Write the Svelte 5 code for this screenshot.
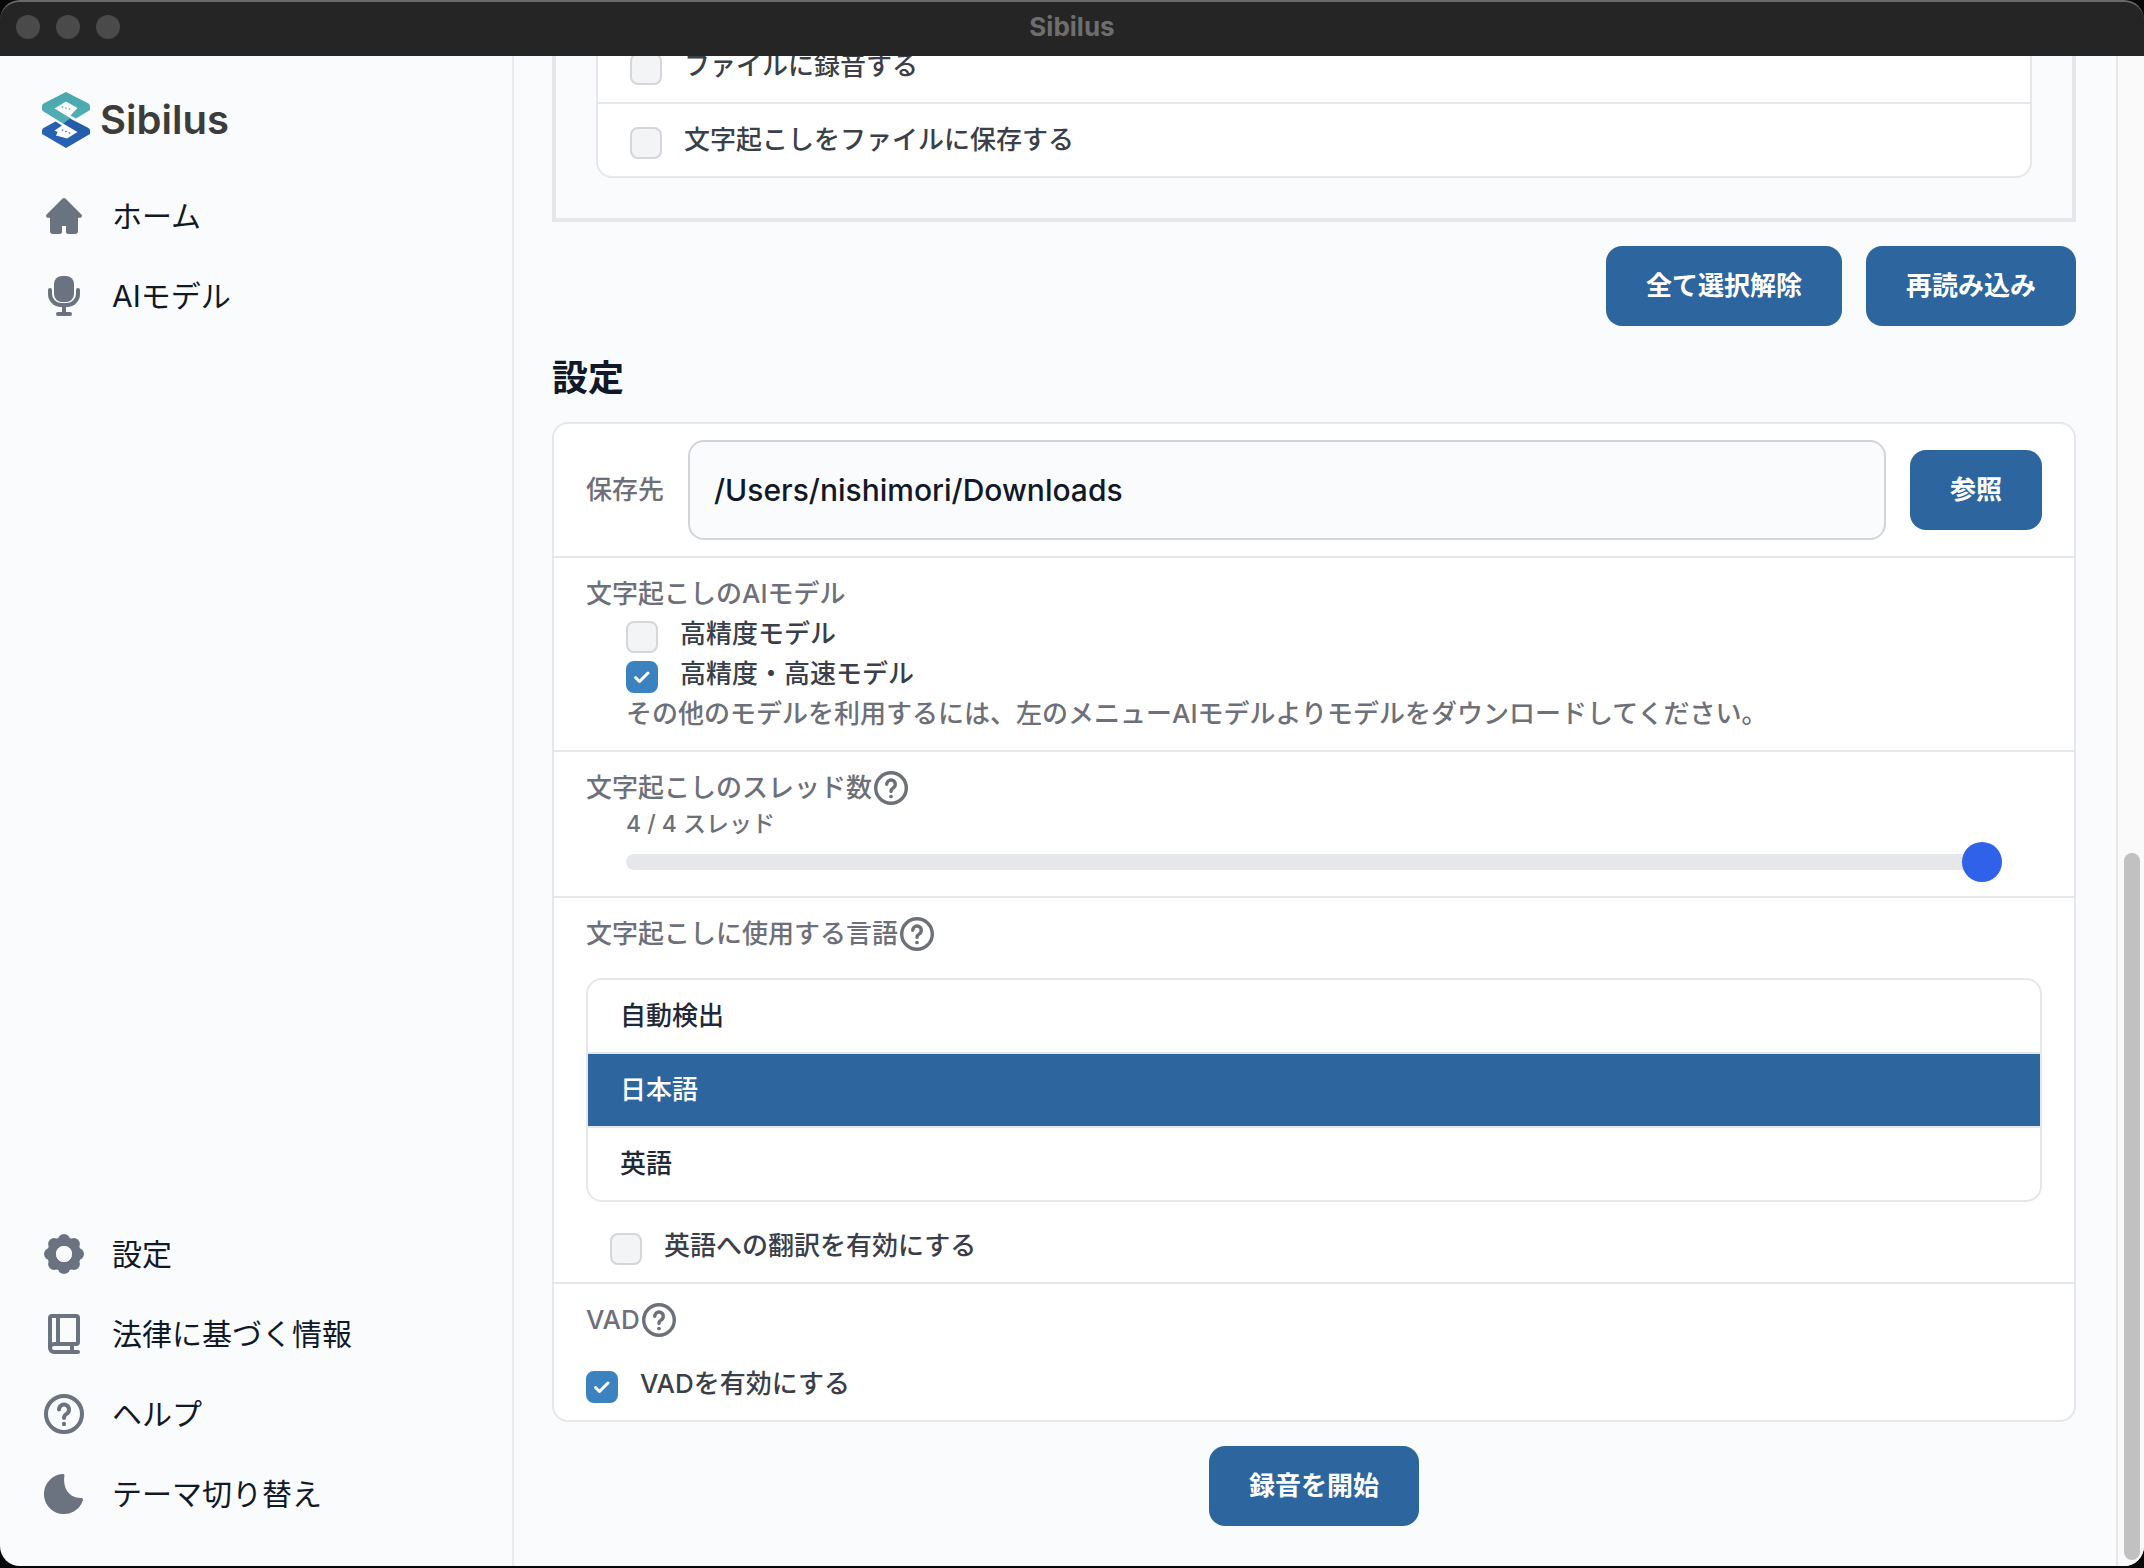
<script lang="ts">
  interface NavItem {
    label: string;
    icon: 'home' | 'mic' | 'gear' | 'book' | 'help' | 'moon';
  }

  const mainNav: NavItem[] = [
    { label: 'ホーム', icon: 'home' },
    { label: 'AIモデル', icon: 'mic' },
  ];

  const footerNav: NavItem[] = [
    { label: '設定', icon: 'gear' },
    { label: '法律に基づく情報', icon: 'book' },
    { label: 'ヘルプ', icon: 'help' },
    { label: 'テーマ切り替え', icon: 'moon' },
  ];

  const gearAngles = [0, 45, 90, 135, 180, 225, 270, 315];
  const languages = ['自動検出', '日本語', '英語'];
  const maxThreads = 4;

  let outputs = $state([
    { label: 'ファイルに録音する', checked: false },
    { label: '文字起こしをファイルに保存する', checked: false },
  ]);
  let models = $state([
    { label: '高精度モデル', checked: false },
    { label: '高精度・高速モデル', checked: true },
  ]);
  let saveDir = $state('/Users/nishimori/Downloads');
  let threads = $state(4);
  let language = $state('日本語');
  let translate = $state(false);
  let vad = $state(true);

  function clearOutputs() {
    for (const output of outputs) {
      output.checked = false;
    }
  }
</script>

{#snippet questionMark()}
  <g fill="none" stroke="currentColor" stroke-width="4" stroke-linecap="round" stroke-linejoin="round">
    <circle cx="20" cy="20" r="18" />
    <path d="M15 15.6a5 5 0 1 1 7.6 4.3c-1.8 1.1-2.6 1.9-2.6 4.1" />
  </g>
  <circle cx="20" cy="30" r="2.2" fill="currentColor" />
{/snippet}

{#snippet navLink(item: NavItem)}
  <a class="nav-link" href="#{item.icon}">
    <svg class="nav-icon" viewBox="0 0 40 40" aria-hidden="true">
      {#if item.icon === 'home'}
        <path
          fill="currentColor"
          d="M18.6 2.6a2 2 0 0 1 2.8 0l16 15.8a2 2 0 0 1-1.4 3.4h-2V35a3 3 0 0 1-3 3h-7a2 2 0 0 1-2-2v-6h-4v6a2 2 0 0 1-2 2H9a3 3 0 0 1-3-3V21.8H4a2 2 0 0 1-1.4-3.4z"
        />
      {:else if item.icon === 'mic'}
        <rect x="10" y="0" width="20" height="26" rx="8" fill="currentColor" />
        <path
          d="M6 14v4a11 11 0 0 0 11 11h6a11 11 0 0 0 11-11v-4M20 29v9M14 38h12"
          fill="none"
          stroke="currentColor"
          stroke-width="4"
          stroke-linecap="round"
        />
      {:else if item.icon === 'gear'}
        <g fill="currentColor">
          {#each gearAngles as angle}
            <circle cx="20" cy="6" r="6" transform="rotate({angle} 20 20)" />
          {/each}
        </g>
        <circle cx="20" cy="20" r="12.5" fill="none" stroke="currentColor" stroke-width="9" />
        <circle cx="20" cy="20" r="8" fill="#fafbfd" />
      {:else if item.icon === 'book'}
        <path
          d="M34 38H10a4 4 0 0 1-4-4V4a2 2 0 0 1 2-2h24a2 2 0 0 1 2 2v24a2 2 0 0 1-2 2H10a4 4 0 0 0-4 4M14 2v28M28 30v8"
          fill="none"
          stroke="currentColor"
          stroke-width="4"
          stroke-linecap="round"
        />
      {:else if item.icon === 'help'}
        {@render questionMark()}
      {:else}
        <path
          fill="currentColor"
          d="M20.4 1.8C18.5 15 26 24.5 37.5 24q2 .2 1.3 2.7A20 20 0 1 1 18.5.1q2.5-.3 1.9 1.7z"
        />
      {/if}
    </svg>
    <span>{item.label}</span>
  </a>
{/snippet}

{#snippet help(topic: string)}
  <button class="help" type="button" aria-label={topic}>
    <svg viewBox="0 0 40 40" aria-hidden="true">{@render questionMark()}</svg>
  </button>
{/snippet}

<div class="window">
  <header class="titlebar">
    <div class="lights"><i></i><i></i><i></i></div>
    <div class="title">Sibilus</div>
  </header>

  <div class="body">
    <aside class="sidebar">
      <div class="brand">
        <svg viewBox="0 0 48 56" aria-hidden="true">
          <defs>
            <linearGradient id="teal" x1="0" y1="0" x2="0" y2="1">
              <stop offset="0" stop-color="#4ba6ad" />
              <stop offset="1" stop-color="#4fb0b5" />
            </linearGradient>
            <linearGradient id="blue" x1="1" y1="0" x2="0" y2="1">
              <stop offset="0" stop-color="#1f5aa6" />
              <stop offset="1" stop-color="#2c66b8" />
            </linearGradient>
          </defs>
          <path
            fill="url(#teal)"
            d="M24 0 46.5 11.5Q48 12.5 48 14V18L34 26.5 28.5 23.5 35.5 16 24 9.5 12.5 16.5 29 26.5 21 31.5 1.5 19.5Q0 18.5 0 17V14Q0 12.5 1.5 11.5Z"
          />
          <path
            fill="url(#blue)"
            d="M28 26.5 46.5 36Q48 37 48 38.5V42L24 56 0 42V38.5Q0 37 1.5 36L13.5 29.5 20 33.5 12.5 38.5 15.5 40 14 43.5 25 46.5 35.5 40 21 31.5Z"
          />
          <g fill="#4ba6ad">
            <circle cx="20.5" cy="15" r=".8" />
            <circle cx="24" cy="16" r=".8" />
            <circle cx="27.5" cy="17" r=".8" />
          </g>
          <g fill="#2c66b8">
            <circle cx="20.5" cy="38" r=".8" />
            <circle cx="24" cy="39.5" r=".8" />
            <circle cx="27.5" cy="41" r=".8" />
          </g>
        </svg>
        <span>Sibilus</span>
      </div>
      <nav class="nav">
        {#each mainNav as item}
          {@render navLink(item)}
        {/each}
      </nav>
      <nav class="nav nav-footer">
        {#each footerNav as item}
          {@render navLink(item)}
        {/each}
      </nav>
    </aside>

    <main class="content">
      <section class="outputs">
        <ul class="list">
          {#each outputs as output}
            <li>
              <label class="check">
                <input type="checkbox" bind:checked={output.checked} />
                <span>{output.label}</span>
              </label>
            </li>
          {/each}
        </ul>
      </section>

      <div class="actions">
        <button class="btn" type="button" onclick={clearOutputs}>全て選択解除</button>
        <button class="btn" type="button">再読み込み</button>
      </div>

      <h2>設定</h2>

      <section class="card">
        <div class="row save">
          <label for="save-dir">保存先</label>
          <input id="save-dir" type="text" bind:value={saveDir} />
          <button class="btn" type="button">参照</button>
        </div>

        <div class="row">
          <div class="row-label">文字起こしのAIモデル</div>
          <div class="indent">
            {#each models as model}
              <label class="check">
                <input type="checkbox" bind:checked={model.checked} />
                <span>{model.label}</span>
              </label>
            {/each}
            <p>その他のモデルを利用するには、左のメニューAIモデルよりモデルをダウンロードしてください。</p>
          </div>
        </div>

        <div class="row">
          <div class="row-label">文字起こしのスレッド数{@render help('スレッド数について')}</div>
          <div class="indent threads">
            <label for="threads">{threads} / {maxThreads} スレッド</label>
            <input id="threads" type="range" min="1" max={maxThreads} bind:value={threads} />
          </div>
        </div>

        <div class="row">
          <div class="row-label">文字起こしに使用する言語{@render help('言語について')}</div>
          <ul class="list languages">
            {#each languages as name}
              <li>
                <button
                  type="button"
                  class:selected={language === name}
                  aria-pressed={language === name}
                  onclick={() => (language = name)}
                >
                  {name}
                </button>
              </li>
            {/each}
          </ul>
          <label class="check translate">
            <input type="checkbox" bind:checked={translate} />
            <span>英語への翻訳を有効にする</span>
          </label>
        </div>

        <div class="row">
          <div class="row-label">VAD{@render help('VADについて')}</div>
          <label class="check vad">
            <input type="checkbox" bind:checked={vad} />
            <span>VADを有効にする</span>
          </label>
        </div>
      </section>

      <div class="start">
        <button class="btn" type="button">録音を開始</button>
      </div>
    </main>

    <div class="scrollbar">
      <div class="spacer"></div>
      <div class="thumb"></div>
    </div>
  </div>
</div>

<style>
  :global(body) {
    margin: 0;
    background: #08080a;
  }

  .window {
    box-sizing: border-box;
    display: flex;
    flex-direction: column;
    height: 100vh;
    border-bottom: 2px solid #08080a;
    color: #111827;
    font-family: Inter, 'Noto Sans CJK JP', sans-serif;
    font-size: 26px;
    font-weight: 500;
    line-height: 40px;
  }

  button,
  input {
    font: inherit;
  }

  ul {
    list-style: none;
    margin: 0;
    padding: 0;
  }

  .titlebar {
    box-sizing: border-box;
    display: grid;
    grid-template-columns: 1fr auto 1fr;
    align-items: center;
    flex: none;
    height: 56px;
    padding: 0 16px 4px;
    border-top: 2px solid #6a6a6a;
    border-radius: 20px 20px 0 0;
    background: #252525;
  }

  .lights {
    display: flex;
    gap: 16px;
  }

  .lights i {
    width: 24px;
    height: 24px;
    border-radius: 50%;
    background: #4a4a4a;
  }

  .title {
    color: #6e6e6e;
    font-weight: 700;
  }

  .body {
    display: flex;
    flex: 1;
    min-height: 0;
    overflow: hidden;
    border-radius: 0 0 20px 20px;
    background: #fafbfd;
  }

  .sidebar {
    box-sizing: border-box;
    display: flex;
    flex-direction: column;
    flex: none;
    width: 514px;
    padding: 36px 24px 36px 42px;
    border-right: 2px solid #ebecef;
  }

  .brand {
    display: flex;
    align-items: center;
    gap: 10px;
    margin-bottom: 32px;
    color: #3c3c3b;
    font-size: 40px;
    font-weight: 600;
  }

  .brand svg {
    width: 48px;
    height: 56px;
  }

  .nav {
    display: flex;
    flex-direction: column;
    gap: 8px;
    padding-left: 2px;
  }

  .nav-footer {
    margin-top: auto;
  }

  .nav-link {
    display: flex;
    align-items: center;
    gap: 28px;
    height: 72px;
    color: #111827;
    font-size: 30px;
    font-weight: 400;
    text-decoration: none;
  }

  .nav-icon {
    width: 40px;
    height: 40px;
    overflow: visible;
    color: #6b7280;
  }

  /* scrolled to the end: the earlier part runs out under the title bar */
  .content {
    display: flex;
    flex: 1;
    flex-direction: column;
    justify-content: flex-end;
    min-width: 0;
    padding: 0 40px 40px 38px;
    border-right: 2px solid #e7e8ea;
  }

  .outputs {
    padding: 40px;
    border: 4px solid #e5e7eb;
  }

  .list {
    overflow: hidden;
    border: 2px solid #e5e7eb;
    border-radius: 16px;
    background: #fff;
  }

  .list li + li {
    border-top: 2px solid #e5e7eb;
  }

  .outputs li {
    padding: 16px 32px;
  }

  .check {
    display: flex;
    align-items: flex-start;
    gap: 22px;
    color: #3a3f49;
  }

  .check input {
    appearance: none;
    box-sizing: border-box;
    flex: none;
    width: 32px;
    height: 32px;
    margin: 7px 0 0;
    border: 2px solid #d4d6da;
    border-radius: 8px;
    background: #f3f4f6;
  }

  .check input:checked {
    border-color: #3b82c0;
    background: #3b82c0
      url("data:image/svg+xml,%3Csvg xmlns='http://www.w3.org/2000/svg' viewBox='0 0 28 28'%3E%3Cpath d='M7.5 14.5l4 4L20 10' fill='none' stroke='white' stroke-width='3' stroke-linecap='round' stroke-linejoin='round'/%3E%3C/svg%3E")
      center / 28px 28px no-repeat;
  }

  .actions {
    display: flex;
    justify-content: flex-end;
    gap: 24px;
    margin-top: 24px;
  }

  .btn {
    flex: none;
    height: 80px;
    padding: 0 40px;
    border: 0;
    border-radius: 16px;
    background: #2d669e;
    color: #fff;
    font-weight: 700;
    cursor: pointer;
  }

  h2 {
    margin: 32px 0 24px;
    font-size: 36px;
    font-weight: 700;
    line-height: 40px;
  }

  .card {
    border: 2px solid #e5e7eb;
    border-radius: 16px;
    background: #fff;
    color: #6d7078;
  }

  .row {
    padding: 16px 32px;
  }

  .row + .row {
    border-top: 2px solid #e5e7eb;
  }

  .save {
    display: flex;
    align-items: center;
    gap: 24px;
  }

  .save input {
    box-sizing: border-box;
    flex: 1;
    min-width: 0;
    height: 100px;
    padding: 0 24px;
    border: 2px solid #d1d5db;
    border-radius: 16px;
    background: #fafbfd;
    color: #111827;
    font-size: 30px;
  }

  .row-label {
    display: flex;
    align-items: center;
    height: 40px;
  }

  .help {
    display: flex;
    margin-left: 2px;
    padding: 0;
    border: 0;
    background: none;
    color: inherit;
    cursor: pointer;
  }

  .help svg {
    width: 34px;
    height: 34px;
  }

  .indent {
    padding: 0 40px;
  }

  .indent p {
    margin: 0;
  }

  .threads {
    display: flex;
    flex-direction: column;
    font-size: 23px;
    line-height: 32px;
  }

  .threads input {
    appearance: none;
    height: 16px;
    margin: 14px 0 10px;
    border-radius: 8px;
    background: #e5e7eb;
  }

  .threads input::-webkit-slider-thumb {
    appearance: none;
    width: 40px;
    height: 40px;
    border-radius: 50%;
    background: #2f62e8;
  }

  .languages {
    margin: 24px 0;
  }

  .languages button {
    display: block;
    width: 100%;
    padding: 16px 32px;
    border: 0;
    background: none;
    color: #1f2937;
    text-align: left;
    cursor: pointer;
  }

  .languages button.selected {
    background: #2d669e;
    color: #fff;
  }

  .translate {
    margin-left: 24px;
  }

  .vad {
    margin-top: 24px;
  }

  .start {
    display: flex;
    justify-content: center;
    margin-top: 24px;
  }

  .scrollbar {
    display: flex;
    flex: none;
    flex-direction: column;
    width: 16px;
    padding: 0 4px 6px 6px;
    background: #fafafa;
  }

  .spacer {
    flex: 53;
  }

  .thumb {
    flex: 47;
    border-radius: 8px;
    background: #c1c1c1;
  }
</style>
